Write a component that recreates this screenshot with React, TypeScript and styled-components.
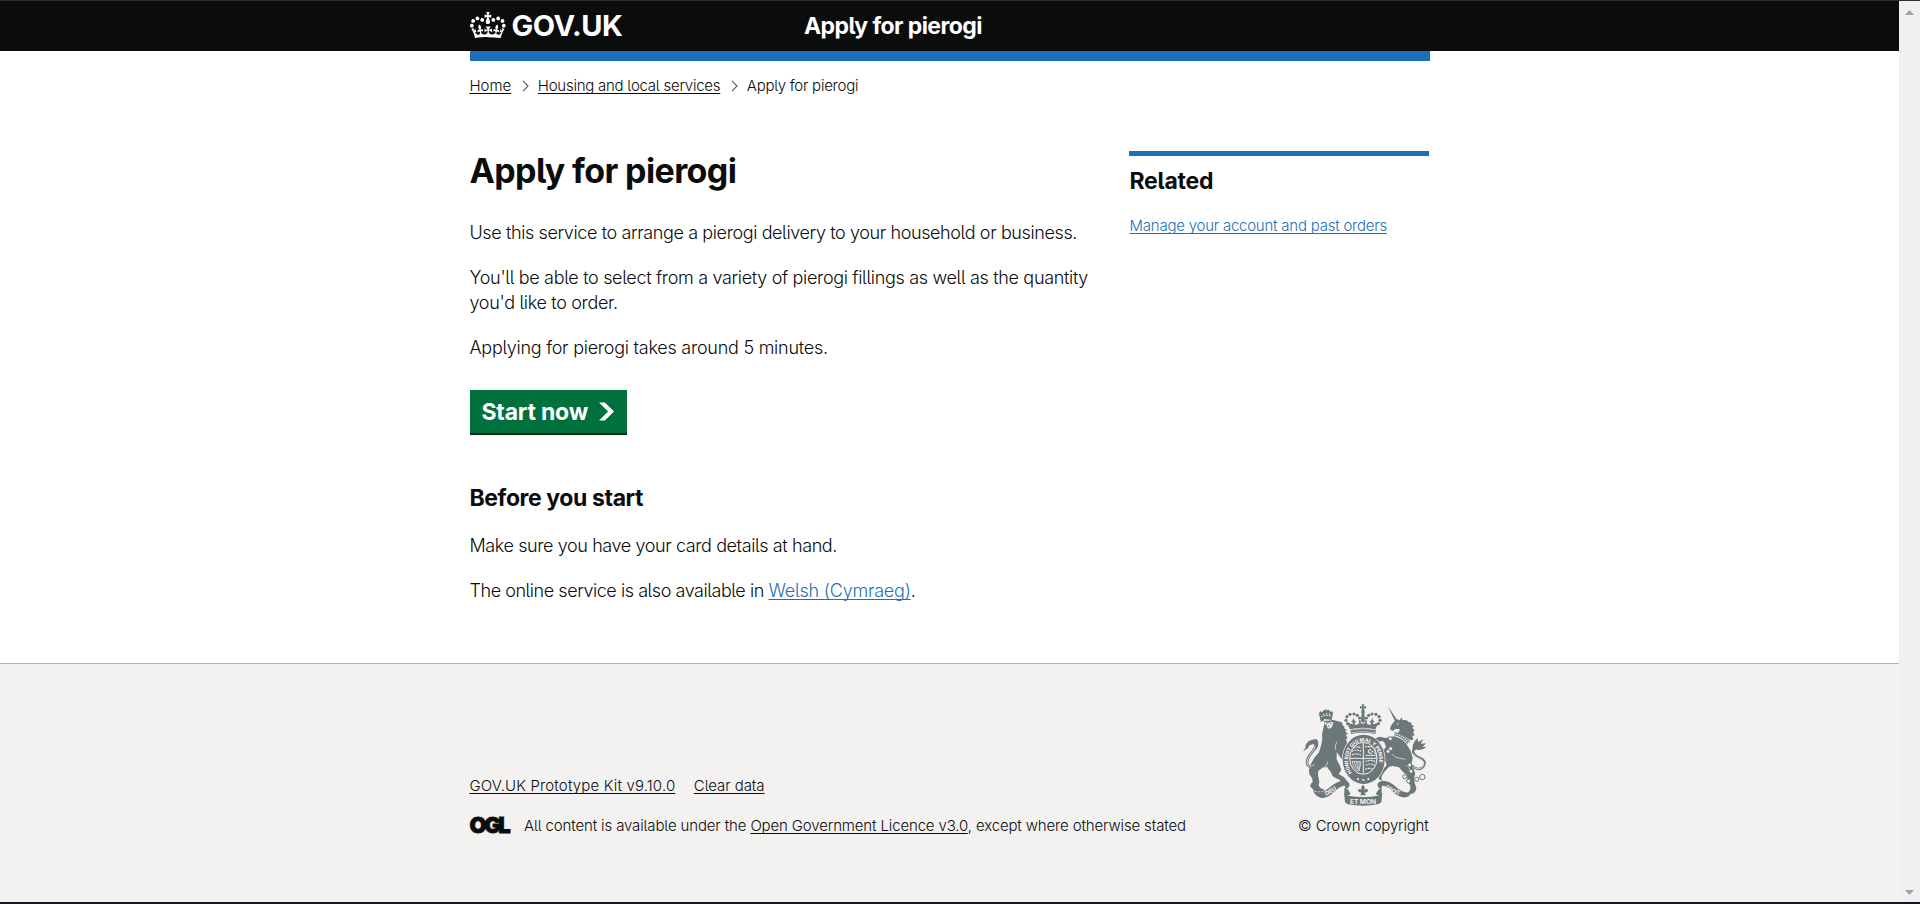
import React from "react";
import styled, { createGlobalStyle, css } from "styled-components";

const ink = "#0b0c0c";
const blue = "#1d70b8";

const GlobalStyle = createGlobalStyle`
  *, *::before, *::after { box-sizing: border-box; }
  body {
    margin: 0;
    overflow: hidden;
    background: #fff;
    color: ${ink};
    font-family: Inter, "Liberation Sans", sans-serif;
    font-feature-settings: "cv05";
  }
  h1, h2, p, ul, ol { margin: 0; padding: 0; }
`;

const Window = styled.div`
  display: grid;
  grid-template-columns: 1fr 21px;
  height: 904px;
  border-top: 1px solid #2b2c2c;
  border-bottom: 2px solid #16171c;
`;

const Page = styled.div`
  display: flex;
  flex-direction: column;
  min-width: 0;
`;

const Scrollbar = styled.div`
  display: flex;
  flex-direction: column;
  justify-content: space-between;
  align-items: center;
  padding: 9px 0 7px;
  background: #f0f0f0;
`;

const Container = styled.div`
  width: 960px;
  margin: 0 auto;
`;

const Header = styled.header`
  height: 60px;
  background: linear-gradient(${ink}, ${ink}) no-repeat 0 0 / 100% 50px;
  color: #fff;
`;

const HeaderBar = styled(Container)`
  display: grid;
  grid-template-columns: 334.5px 1fr;
  height: 60px;
  padding-top: 9px;
  border-bottom: 10px solid ${blue};
`;

const Brand = styled.a`
  display: flex;
  align-items: flex-start;
  gap: 6px;
  font-size: 29px;
  font-weight: 700;
  line-height: 31px;
  letter-spacing: -0.45px;
  svg { margin-top: -2px; }
`;

const ServiceName = styled.a`
  font-size: 23px;
  font-weight: 700;
  line-height: 32px;
  letter-spacing: -0.57px;
`;

const small = css`
  font-size: 15px;
  line-height: 20px;
  font-weight: 300;
`;

const Link = styled.a<{ $tone?: "blue"; $tracking?: number }>`
  color: ${(p) => (p.$tone === "blue" ? blue : ink)};
  letter-spacing: ${(p) => (p.$tracking === undefined ? "inherit" : `${p.$tracking}px`)};
  text-decoration: underline;
  text-decoration-thickness: 1px;
  text-underline-offset: 2px;
  text-decoration-skip-ink: none;
`;

const Breadcrumbs = styled.ol`
  ${small}
  display: flex;
  align-items: center;
  list-style: none;
  padding-top: 15px;
  letter-spacing: -0.24px;
  svg { margin: 0 9px 0 10.5px; }
`;

const Crumb = styled.li`
  display: flex;
  align-items: center;
`;

const Main = styled(Container)`
  display: flex;
  justify-content: space-between;
  flex: 1;
  padding-top: 49px;
`;

const Content = styled.main`
  width: 630px;
`;

const Title = styled.h1`
  margin: 1px 0 24px;
  font-size: 34px;
  line-height: 50px;
  font-weight: 700;
  letter-spacing: -0.62px;
`;

const Text = styled.p<{ $tracking: number }>`
  margin-bottom: 20px;
  font-size: 18px;
  line-height: 25px;
  font-weight: 300;
  letter-spacing: ${(p) => p.$tracking}px;
`;

const StartButton = styled.a`
  display: flex;
  align-items: center;
  width: 157px;
  height: 43px;
  margin: 30px 0 50px;
  padding: 0 13px 0 12px;
  justify-content: space-between;
  background: #00703c;
  box-shadow: 0 2px 0 #002d18;
  color: #fff;
  font-size: 23px;
  font-weight: 700;
  letter-spacing: -0.2px;
`;

const Heading = styled.h2<{ $tracking: number }>`
  margin-bottom: 20px;
  font-size: 23px;
  line-height: 30px;
  font-weight: 700;
  letter-spacing: ${(p) => p.$tracking}px;
`;

const Related = styled.aside`
  ${small}
  width: 300px;
  margin: 6px 1px 0 0;
  padding: 10px 0 0 1px;
  border-top: 5px solid ${blue};
  letter-spacing: -0.23px;
`;

const Footer = styled.footer`
  height: 239px;
  padding-top: 40px;
  border-top: 1px solid #b1b4b6;
  background: #f3f2f1;
`;

const FooterInner = styled(Container)`
  ${small}
  display: flex;
  justify-content: space-between;
  align-items: flex-end;
  letter-spacing: -0.14px;
`;

const FooterLinks = styled.ul`
  display: flex;
  gap: 18.5px;
  margin-bottom: 20px;
  list-style: none;
`;

const Licence = styled.div`
  display: flex;
  align-items: center;
  gap: 13.5px;
`;

const OglLogo = styled.span`
  display: inline-block;
  width: 41px;
  margin-top: -2px;
  font-size: 22px;
  line-height: 20px;
  font-weight: 900;
  letter-spacing: -2.4px;
  -webkit-text-stroke: 0.8px ${ink};
`;

const Copyright = styled.a`
  display: flex;
  flex-direction: column;
  align-items: flex-end;
  gap: 10px;
  margin-right: 1px;
  letter-spacing: -0.19px;
  svg { margin-right: 2px; }
`;

const Crown = () => (
  <svg width="36" height="32" viewBox="0 0 36 32" fill="#fff" aria-hidden="true">
    <path
      fillRule="evenodd"
      d="M6.7 12.2c1 .4 2.1-.1 2.5-1s-.1-2.1-1-2.5c-1-.4-2.1.1-2.5 1-.4 1 0 2.1 1 2.5m-4.3 2.5c1 .4 2.1-.1 2.5-1s-.1-2.1-1-2.5c-1-.4-2.1.1-2.5 1-.5 1 0 2.1 1 2.5m-1.3 4.8c1 .4 2.1-.1 2.5-1 .4-1-.1-2.1-1-2.5-1-.4-2.1.1-2.5 1-.4 1 0 2.1 1 2.5m10.4-5.8c1 .4 2.1-.1 2.5-1s-.1-2.1-1-2.5c-1-.4-2.1.1-2.5 1s0 2.1 1 2.5m17.4-1.5c-1 .4-2.1-.1-2.5-1s.1-2.1 1-2.5c1-.4 2.1.1 2.5 1 .5 1 0 2.1-1 2.5m4.3 2.5c-1 .4-2.1-.1-2.5-1s.1-2.1 1-2.5c1-.4 2.1.1 2.5 1 .5 1 0 2.1-1 2.5m1.3 4.8c-1 .4-2.1-.1-2.5-1-.4-1 .1-2.1 1-2.5 1-.4 2.1.1 2.5 1 .4 1 0 2.1-1 2.5m-10.4-5.8c-1 .4-2.1-.1-2.5-1s.1-2.1 1-2.5c1-.4 2.1.1 2.5 1s0 2.1-1 2.5m-5.3-4.9 2.4 1.3V6.5l-2.4.8c-.1-.1-.1-.2-.2-.2s1-3 1-3h-3.4l1 3c-.1.1-.2.1-.2.2-.1.1-2.4-.7-2.4-.7v3.5L17 8.8c.1.1.1.2.2.3l-1.4 4.2c-.1.2-.1.4-.1.6 0 1.1.8 2 1.9 2.2h.7c1-.2 1.9-1.1 1.9-2.1 0-.2 0-.4-.1-.6l-1.4-4.2c.1-.1.2-.2.2-.3m-1 20.3c4.6 0 8.9.3 12.8.9 1.1-4.6 2.4-7.2 3.8-9.1l-2.6-.9c.3 1.3.3 1.9 0 2.8-.4-.4-.8-1.2-1.1-2.4l-1.2 4.2c.8-.5 1.4-.9 2-.9-1.2 2.6-2.7 3.2-3.6 3-1.2-.2-1.7-1.3-1.5-2.2.3-1.3 1.6-1.6 2.2-.1 1.2-2.4-.8-3.1-2.1-2.4 1.9-1.9 2.2-3.6.6-5.7-2.2 1.7-2.2 3.3-1.2 5.6-1.3-1.5-3.3-.7-2.5 1.7.9-1.4 2.1-.5 2 .8-.2 1.2-1.7 2.1-3.7 1.9-2.8-.2-3-2.2-3-3.7.7-.1 1.9.5 3 2l.4-4.4c-1.1 1.2-2.2 1.4-3.3 1.4.4-1.2 2.1-3.1 2.1-3.1h-5.5s1.7 2 2.1 3.1c-1.1 0-2.2-.2-3.3-1.4l.4 4.4c1.1-1.5 2.3-2.1 3-2-.1 1.6-.2 3.5-3 3.7-1.9.2-3.5-.7-3.7-1.9-.2-1.3 1-2.2 1.9-.8.7-2.4-1.2-3.1-2.4-1.7 1-2.3 1-4-1.2-5.6-1.6 2-1.3 3.8.6 5.7-1.2-.7-3.2 0-2.1 2.4.6-1.5 1.9-1.1 2.2.1.2.9-.3 1.9-1.5 2.2-.9.2-2.5-.5-3.7-3 .6 0 1.3.4 2 .9L5 20.4c-.3 1.1-.7 1.9-1.1 2.4-.3-.9-.2-1.5 0-2.8l-2.6.9C2.7 22.8 4 25.4 5.1 30c3.8-.5 8.2-.9 12.7-.9"
    />
  </svg>
);

const CrumbArrow = () => (
  <svg width="7" height="12" viewBox="0 0 7 12" fill="none" stroke="#505a5f" strokeWidth="1.1" aria-hidden="true">
    <path d="M1 .8 6 6 1 11.2" />
  </svg>
);

const StartArrow = () => (
  <svg width="15" height="19" viewBox="0 0 33 40" fill="#fff" aria-hidden="true">
    <path d="M0 0h13l20 20-20 20H0l20-20z" />
  </svg>
);

const ScrollArrow = ({ down = false }: { down?: boolean }) => (
  <svg width="9" height="5" viewBox="0 0 9 5" fill="#a3a3a3" aria-hidden="true">
    <path d={down ? "M0 0h9L4.5 5z" : "M4.5 0 9 5H0z"} />
  </svg>
);

const grey = "#6c7779";
const paper = "#f3f2f1";

const beads = [
  [203, 101], [198, 91], [201, 80], [210, 73], [222, 72], [232, 76], [239, 84],
  [295, 101], [300, 91], [297, 80], [288, 73], [276, 72], [266, 76], [259, 84],
];

const chain = [
  [331, 146], [324, 184], [332, 176], [389, 225], [393, 244], [374, 260], [386, 273], [410, 268],
];

/* Royal coat of arms: crowned lion and chained unicorn either side of the garter shield. */
const RoyalArms = () => (
  <svg width="125" height="102" viewBox="66 42 375 306" fill={grey} aria-hidden="true">
    {/* lion */}
    <path d="M121 90l-4-20 4-6 6 3 3-7 6 1 1-5 4 5 6-2 4 6 6-1 2 6-4 20q-18-5-34 0z" />
    <path d="M124 80q14-6 30-2M130 72l2 4M140 69v5M149 71l-1 4" fill="none" stroke={paper} strokeWidth="3" strokeDasharray="5 3" />
    <path d="M120 96l10-4 14 0 15-2 24 6 6 6-3 2 9 6-4 3 10 8-6 2 9 9-7 2 6 10-5 3 4 14-6 10 9 10-4 18 4 6-3 14-14-9-8-10-10-14 0 22 10 20 4 12-8 12 16 10 10 12-5 11-10-2-8-14-14-6-8-6-4-10-12-16-14 2-12 10-1 12 4 20-2 12 6 8 9 3 1 6-6-1-4 4-5-3-5 3-5-4-6-1-3-6-6-4-1-7 4-6 3-3-2-12-8-11-1-14 6-18 10-18 14-16 6-20 4-20-1-14 4-18 3-18-2-10-3-8z" />
    <path d="M135 96l7 2 5 0 6-3 8 3-3 5-2 8-7 5-6-2-3-9-8-3z" fill={paper} />
    <path d="M137 100l6 2M149 101l6-1M145 105l3 7" stroke={grey} strokeWidth="2.5" />
    <path d="M103 224q-20 12-22-6 1-16 16-32 14-16 7-32" fill="none" stroke={grey} strokeWidth="8" />
    <path d="M103 224q-20 12-22-6 1-16 16-32 10-12 9-22" fill="none" stroke={paper} strokeWidth="2.4" />
    <path d="M67 184q10-6 10-18 4-13 20-17l12-2 6 8-1 14-7 14 0-14-5-7-14 4q-3 12-21 18z" />
    <path d="M128 236q14-6 16-22M166 180q-2-12 4-24" fill="none" stroke={paper} strokeWidth="2" />
    {/* unicorn */}
    <path d="M323 47l30 45-7 4z" />
    <path d="M330 118l2-9 9-13 10-8 9 3 3-9 5 8 12 1 6 5 9 2-2 5 9 6-5 4 7 9-5 4 5 10-7 2 3 10-7 3-6-2q-12-12-34-17l7-14-14-1-8 6z" />
    <circle cx="353" cy="102" r="2.4" fill={paper} />
    <path d="M343 131q26 4 43 28" fill="none" stroke={grey} strokeWidth="10" />
    <path d="M343 131q26 4 43 28" fill="none" stroke={paper} strokeWidth="4.5" strokeDasharray="4 3" />
    <path d="M334 140l9-1q22 6 36 22l13 22 6 20-4 20 6 12 6 16-4 12 2 16 5 14-2 10-8 8-16-1 8-12 0-10-8-16-2-16-14-12-10-12-18-4-12 2-14 16-8 12 0 14-9-5 1-12 10-16 12-12 0-8-8-12-8-10-11-2-12 8-6-3 5-9-3-12 1-12 8-5 12 5 8 8 9 2 4-6-4-12-6-6-14 2-4 8-8-4 4-14 14-5 16 4z" />
    <path d="M336 192l10 10 30 6M380 226q8 6 10 16" fill="none" stroke={paper} strokeWidth="2" />
    <path d="M395 226q20 20 35 4 10-14-4-23-21-9-26-18-3-12 10-15" fill="none" stroke={grey} strokeWidth="7" />
    <path d="M398 229q18 15 30 1 8-12-4-21-20-8-25-18" fill="none" stroke={paper} strokeWidth="2.4" />
    <path d="M398 184l0-18 7-14 8-8 1 12 16-8-8 13 16-1-10 11 12-1q-18 16-34 6z" />
    <g fill={paper} stroke={grey} strokeWidth="3">
      {chain.map(([x, y]) => (
        <circle key={`${x}-${y}`} cx={x} cy={y} r="6" />
      ))}
      <circle cx="427" cy="261" r="8" />
    </g>
    {/* garter and shield */}
    <ellipse cx="251" cy="208" rx="65" ry="76" fill={paper} />
    <ellipse cx="251" cy="208" rx="63" ry="74" />
    <ellipse cx="250" cy="205" rx="41" ry="48" fill="none" stroke={paper} strokeWidth="3" />
    <path id="garter" d="M216 248a47 56 0 1 1 70 0" fill="none" />
    <text fill={paper} fontSize="15" fontWeight="800">
      <textPath href="#garter">HONI SOIT QUI MAL Y PENSE</textPath>
    </text>
    <path d="M250 158v93M210 205h81" stroke={paper} strokeWidth="3" />
    <path
      d="M220 174q12-7 24 0M216 184q14-8 27 0M216 195q12-6 27 0M256 170h24M257 196h28v-22M264 185l6-7 8 7-6 6zM257 215q14-8 28 0M257 226q14-8 27 0M256 238q12-6 22 0"
      fill="none"
      stroke={paper}
      strokeWidth="3.5"
      strokeDasharray="6 2"
    />
    <path d="M217 214q2 22 20 30l6-28zM223 215l6 20M230 214l4 26M237 214l0 24" fill="none" stroke={paper} strokeWidth="2.2" />
    <g fill={paper}>
      <circle cx="234" cy="267" r="3.2" />
      <circle cx="250" cy="270" r="3.2" />
      <circle cx="265" cy="267" r="3.2" />
    </g>
    {/* royal crown */}
    <path d="M245 43h8l-2 7 7-2v8l-7-2 3 9h-10l3-9-7 2v-8l7 2z" />
    <circle cx="249" cy="67" r="5.5" />
    <path d="M245 72h8l2 20-6 8-6-8zM203 102l5-2 10 3 0-6-5-2 5-4 2-8 3 8 6 4-5 3 1 7 10-2 3-7-3-4 5-2 3 4-1 6 6 1 7-1-1-6 3-4 5 2-3 4 3 7 10 2 1-7-5-3 6-4 3-8 2 8 5 4-5 2 0 6 10-3 5 2-8 16q-37-9-76 0z" />
    {beads.map(([x, y]) => (
      <circle key={`${x}-${y}`} cx={x} cy={y} r="4.8" />
    ))}
    <path d="M211 119q39-9 77 0l-2 13q-37-7-73 0z" />
    <path d="M212 120q38-8 75 0M214 128q36-7 71 0" fill="none" stroke={paper} strokeWidth="1.8" />
    {/* motto ribbon */}
    <path d="M99 302q24 12 48-8 22-21 45-22 16 2 17 12-1 8-8 12l-6-2q3-7-4-7-12 2-30 20-20 20-40 16-14-4-22-21z" />
    <path d="M395 305q-24 8-46-13-18-19-40-20-15 2-17 12 1 8 7 12l7-2q-3-7 4-7 12 2 30 20 20 18 38 15 12-3 17-17z" />
    <path d="M193 293l12 6 7 14-10 4-9-4zM305 293l-10 6-8 14 10 4 8-4z" />
    <path d="M192 309l12 8q46 8 90 0l13-8-3 28-10 6q-44 8-90 0l-9-6z" />
    <path d="M249 284q8 8 4 16 8-6 11 0 0 8-11 8l5 8h-18l5-8q-11 0-11-8 3-6 11 0-4-8 4-16z" />
    <path id="motto-left" d="M137 317q20-6 44-30" fill="none" />
    <path id="motto-right" d="M315 293q24 20 66 26" fill="none" />
    <g fill={paper} fontWeight="700">
      <text fontSize="17">
        <textPath href="#motto-left">DIEU</textPath>
      </text>
      <text fontSize="16">
        <textPath href="#motto-right">DROIT</textPath>
      </text>
      <text x="249" y="341" textAnchor="middle" fontSize="20">ET MON</text>
    </g>
  </svg>
);

export default function App() {
  return (
    <>
      <GlobalStyle />
      <Window>
        <Page>
          <Header>
            <HeaderBar>
              <Brand>
                <Crown />
                GOV.UK
              </Brand>
              <ServiceName>Apply for pierogi</ServiceName>
            </HeaderBar>
          </Header>
          <Container>
            <Breadcrumbs>
              <Crumb>
                <Link $tracking={0}>Home</Link>
              </Crumb>
              <Crumb>
                <CrumbArrow />
                <Link>Housing and local services</Link>
              </Crumb>
              <Crumb>
                <CrumbArrow />
                Apply for pierogi
              </Crumb>
            </Breadcrumbs>
          </Container>
          <Main>
            <Content>
              <Title>Apply for pierogi</Title>
              <Text $tracking={-0.39}>
                Use this service to arrange a pierogi delivery to your household or business.
              </Text>
              <Text $tracking={-0.33}>
                You'll be able to select from a variety of pierogi fillings as well as the quantity you'd like to order.
              </Text>
              <Text $tracking={-0.25}>Applying for pierogi takes around 5 minutes.</Text>
              <StartButton>
                Start now
                <StartArrow />
              </StartButton>
              <Heading $tracking={-0.4}>Before you start</Heading>
              <Text $tracking={-0.4}>Make sure you have your card details at hand.</Text>
              <Text $tracking={-0.45}>
                The online service is also available in{" "}
                <Link $tone="blue" $tracking={-0.22}>
                  Welsh (Cymraeg)
                </Link>
                .
              </Text>
            </Content>
            <Related>
              <Heading $tracking={-0.25}>Related</Heading>
              <Link $tone="blue">Manage your account and past orders</Link>
            </Related>
          </Main>
          <Footer>
            <FooterInner>
              <div>
                <FooterLinks>
                  <li>
                    <Link $tracking={0.15}>GOV.UK Prototype Kit v9.10.0</Link>
                  </li>
                  <li>
                    <Link $tracking={-0.08}>Clear data</Link>
                  </li>
                </FooterLinks>
                <Licence>
                  <OglLogo>OGL</OglLogo>
                  <span>
                    All content is available under the <Link>Open Government Licence v3.0</Link>, except where otherwise
                    stated
                  </span>
                </Licence>
              </div>
              <Copyright>
                <RoyalArms />
                © Crown copyright
              </Copyright>
            </FooterInner>
          </Footer>
        </Page>
        <Scrollbar>
          <ScrollArrow />
          <ScrollArrow down />
        </Scrollbar>
      </Window>
    </>
  );
}
